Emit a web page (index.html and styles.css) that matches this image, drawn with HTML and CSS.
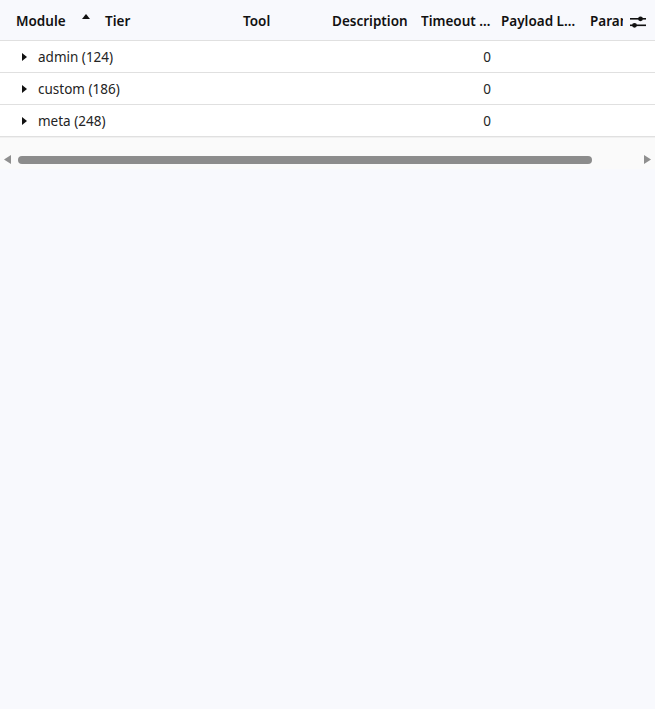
FILE: index.html
```html
<!DOCTYPE html>
<html>
<head>
<meta charset="utf-8">
<link rel="stylesheet" href="styles.css">
</head>
<body>
<div class="grid">
  <div class="viewport">
    <div class="row head">
      <div class="cell c-module"><span>Module</span><svg class="sort" width="8" height="5" viewBox="0 0 8 5"><path d="M0 5 L4 0 L8 5 Z" fill="#111"/></svg></div>
      <div class="cell c-tier">Tier</div>
      <div class="cell c-tool">Tool</div>
      <div class="cell c-desc">Description</div>
      <div class="cell c-timeout"><span class="ell">Timeout (ms)</span></div>
      <div class="cell c-payload"><span class="ell">Payload Limit</span></div>
      <div class="cell c-param"><span class="clip">Parameters</span></div>
    </div>
    <div class="row body">
      <div class="cell c-module"><svg class="caret" width="5" height="8" viewBox="0 0 5 8"><path d="M0 0 L5 4 L0 8 Z" fill="#111"/></svg><span>admin (124)</span></div>
      <div class="cell c-tier"></div>
      <div class="cell c-tool"></div>
      <div class="cell c-desc"></div>
      <div class="cell c-timeout num">0</div>
      <div class="cell c-payload"></div>
      <div class="cell c-param"></div>
    </div>
    <div class="row body">
      <div class="cell c-module"><svg class="caret" width="5" height="8" viewBox="0 0 5 8"><path d="M0 0 L5 4 L0 8 Z" fill="#111"/></svg><span>custom (186)</span></div>
      <div class="cell c-tier"></div>
      <div class="cell c-tool"></div>
      <div class="cell c-desc"></div>
      <div class="cell c-timeout num">0</div>
      <div class="cell c-payload"></div>
      <div class="cell c-param"></div>
    </div>
    <div class="row body">
      <div class="cell c-module"><svg class="caret" width="5" height="8" viewBox="0 0 5 8"><path d="M0 0 L5 4 L0 8 Z" fill="#111"/></svg><span>meta (248)</span></div>
      <div class="cell c-tier"></div>
      <div class="cell c-tool"></div>
      <div class="cell c-desc"></div>
      <div class="cell c-timeout num">0</div>
      <div class="cell c-payload"></div>
      <div class="cell c-param"></div>
    </div>
  </div>
  <button class="tune" aria-label="Columns">
    <svg width="16" height="14" viewBox="0 0 16 14">
      <rect x="0" y="3" width="16" height="1.6" fill="#111"/>
      <circle cx="10.5" cy="3.8" r="2.4" fill="#111"/>
      <rect x="0" y="9.5" width="16" height="1.6" fill="#111"/>
      <circle cx="4.5" cy="10.3" r="2.4" fill="#111"/>
    </svg>
  </button>
  <div class="hscroll">
    <svg class="arrow" width="7" height="9" viewBox="0 0 7 9"><path d="M7 0 L0 4.5 L7 9 Z" fill="#8f8f8f"/></svg>
    <div class="track"><div class="thumb"></div></div>
    <svg class="arrow" width="7" height="9" viewBox="0 0 7 9"><path d="M0 0 L7 4.5 L0 9 Z" fill="#8f8f8f"/></svg>
  </div>
</div>
</body>
</html>
```
FILE: styles.css
```css
html, body {
  margin: 0;
  padding: 0;
  background: #f8f9fd;
  font-family: "Noto Sans", "Open Sans", sans-serif;
  color: #242424;
}
.grid {
  position: relative;
  width: 655px;
}
.viewport {
  overflow: hidden;
  width: 655px;
}
.row {
  display: flex;
  width: 760px;
  box-sizing: border-box;
}
.head {
  height: 41px;
  padding-top: 2px;
  background: #f8f9fd;
  border-bottom: 1px solid #e0e0e0;
  font-weight: 600;
  font-size: 13.5px;
  color: #111;
}
.body {
  height: 32px;
  background: #fff;
  border-bottom: 1px solid #e0e0e0;
  font-size: 13.5px;
}
.cell {
  display: flex;
  align-items: center;
  box-sizing: border-box;
  flex: none;
  white-space: nowrap;
  overflow: hidden;
}
.c-module { width: 97px; padding-left: 16px; }
.sort { margin-left: 16px; margin-top: -10px; }
.c-tier { width: 138px; padding-left: 8px; }
.c-tool { width: 89px; padding-left: 8px; }
.c-desc { width: 89px; padding-left: 8px; }
.c-timeout { width: 80px; padding-left: 8px; padding-right: 1px; }
.c-payload { width: 89px; padding-left: 8px; padding-right: 4px; }
.c-param { width: 120px; padding-left: 8px; }
.head .c-param { width: 41px; padding-right: 0; }
.ell { overflow: hidden; text-overflow: ellipsis; display: block; }
.clip { overflow: hidden; display: block; }
.body .c-module { padding-left: 22px; overflow: visible; }
.caret { flex: none; margin-right: 11px; }
.body .num { justify-content: flex-end; padding-right: 2px; }
.tune {
  position: absolute;
  top: 14px;
  right: 9px;
  width: 20px;
  height: 16px;
  padding: 0;
  border: 0;
  background: #f8f9fd;
  display: flex;
  align-items: center;
  justify-content: flex-end;
}
.hscroll {
  height: 32px;
  background: #fafafa;
  border-top: 1px solid #f0f0f0;
  display: flex;
  align-items: center;
  gap: 7px;
  padding: 12px 4px 0 4px;
  box-sizing: border-box;
}
.arrow { flex: none; }
.track { flex: 1; height: 8px; }
.thumb {
  width: 574px;
  height: 8px;
  border-radius: 4px;
  background: #8c8c8c;
}
```
